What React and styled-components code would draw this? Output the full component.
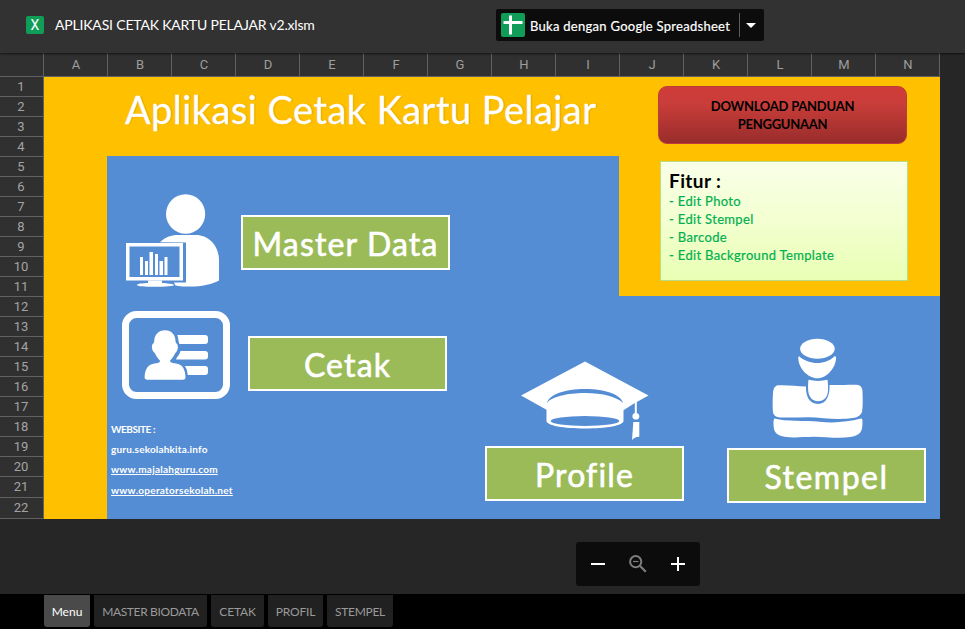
import React from "react";
import styled, { createGlobalStyle } from "styled-components";

const columns = "ABCDEFGHIJKLMN".split("");
const rows = Array.from({ length: 22 }, (_, i) => i + 1);
const features = ["Edit Photo", "Edit Stempel", "Barcode", "Edit Background Template"];
const tabs = [
  { name: "Menu", width: 46, spacing: 0 },
  { name: "MASTER BIODATA", width: 113, spacing: -0.35 },
  { name: "CETAK", width: 53, spacing: -0.2 },
  { name: "PROFIL", width: 55, spacing: -0.2 },
  { name: "STEMPEL", width: 66, spacing: -0.3 },
];

const OperatorIcon = () => (
  <svg width="94" height="93" viewBox="126 194 94 93" fill="#fff">
    <ellipse cx="185.6" cy="214" rx="19.6" ry="19.8" />
    <path d="M160 242.3C165 237 171 235 178 235h18c13 0 23 11 23 25v20.500c-8 4-18 6-28 6-6 0-12 0-15.500-1l-1.500-3H186v-40z" />
    <path d="M126 243h57v37.500h-57zM129.500 246.500v30.500h50v-30.500z" fillRule="evenodd" />
    <path d="M148 280.500h14v2.500c5 .3 12 .8 12 2s-9 1.800-19 1.800-18-.5-18-1.800 6-1.700 11-2z" />
    <path d="M140 257h3v18h-3zM145 261h3v14h-3zM149.500 252h3.500v23h-3.500zM155 254h3v21h-3zM159.500 261h3.500v14h-3.500zM164.500 257h3v18h-3z" />
  </svg>
);

const CardIcon = () => (
  <svg width="108" height="88" viewBox="122 311 108 88" fill="#fff">
    <rect x="125.500" y="314.500" width="101" height="81" rx="11" fill="none" stroke="#fff" strokeWidth="7" />
    <path d="M165 330.300c6.500 0 10.600 4.500 10.600 11.500 0 1.500 2.400 1.800 2.300 5.500-.1 3-1.500 5-2.800 6-1 3-3.200 5-5.100 7.500.4 2.200 3 2.500 6 2.700 6 .5 9.200 5 9.500 13.500 0 1.700-.8 2.700-2.500 2.700h-35.800c-1.700 0-2.600-1-2.600-2.700.3-8.500 4-13 10-13.500 3-.2 5.300-.5 5.400-2.700-1.900-2.500-4-4.500-5-7.500-1.500-1-3-3-3.100-6-.1-3.700 2.200-4 2.300-5.500 0-7 4.300-11.500 10.800-11.500z" />
    <path d="M177.300 335H205q3 0 3 3v3q0 3-3 3h-25.500c-1.500-2.500-.7-5-2.200-9zM180.500 351H205q3 0 3 3v2.500q0 3-3 3h-29c.5-2.500 4-5 4.500-8.500zM184.800 366H205q3 0 3 3v3q0 3-3 3h-17.300c-.2-3-1-6.500-2.900-9z" />
  </svg>
);

const CapIcon = () => (
  <svg width="128" height="80" viewBox="521 361 128 80" fill="#fff">
    <path d="M585 361.500L648.500 395.500 636.800 402v11a3.500 3.500 0 0 1 .7 6.500h-3.200a3.500 3.500 0 0 1 .5-6.500v-10l-11.300 7.300V421c0 4.500-17 7.500-38.500 7.500s-38.500-3-38.500-7.500v-11.300L521 395.500z" />
    <path d="M547 403c2-8.500 18-14 38-14s36 5.500 38 14c-6-6-20-10-38-10s-34 4-38 10z" fill="#548dd4" />
    <ellipse cx="585" cy="421" rx="34.300" ry="5" fill="#548dd4" />
    <path d="M633.300 422h6v14.800c-3 .2-5 .7-7.300 3.200z" />
  </svg>
);

const StampIcon = () => (
  <svg width="92" height="101" viewBox="772 338 92 101" fill="#fff">
    <ellipse cx="817.400" cy="348.800" rx="17.300" ry="10" />
    <path d="M799 356.300c10 9 27 9 35.500 0 1.500-.3 1.700.7 1.600 2-.5 9.500-9 20-18.700 20-9.500 0-18.500-10-19-19-.1-1.500-.4-2.700.6-3z" />
    <path d="M808.500 379.800c6 1.500 13 1.500 19 0 .7 5 .8 9 .3 13-.7 5-5 8.500-10 8.500-4.800 0-8.700-4-9.400-9-.5-3.500-.5-8 .1-12.500z" />
    <path d="M778 385.300c9-.5 18 .8 28 1.200-.3 9 3 17.500 12 17.500 8.500 0 12-9 11.500-19 10 .3 20-.6 27-.3 4 .2 6 3 6 7 .3 8 .4 14-.3 19-.6 4-4 6.300-8 7-16 2.800-31-.2-46-.5-9 0-18 .7-28 .2-4-.2-7-2-7.300-6-.3-8-.3-12 .1-18 .3-4.500 1.500-7.500 5-8.100z" />
    <path d="M774.500 418.500c12 3.300 30 1.800 45 3.300 14 1.300 28 .5 41.500-3.200 1 0 1.600 1.200 1.500 3 .1 10-2 14-12 15.500-14 1.700-25-.5-37-.4-11 .1-19 1.500-29 0-9.500-2-11-5.500-11-14 0-2.200.2-3.700 1-4.200z" />
  </svg>
);

const App = () => {
  return (
    <Page>
      <GlobalStyle />
      <Header>
        <FileInfo>
          <FileBadge>X</FileBadge>
          <FileName>APLIKASI CETAK KARTU PELAJAR v2.xlsm</FileName>
        </FileInfo>
        <OpenButton>
          <svg width="24" height="24" viewBox="0 0 24 24">
            <rect width="24" height="24" rx="2" fill="#0f9d58" />
            <path d="M2.500 9.500h19M9.500 2.500v19" stroke="#fff" strokeWidth="3" />
          </svg>
          <OpenLabel>Buka dengan Google Spreadsheet</OpenLabel>
          <OpenArrow>
            <svg width="10" height="5" viewBox="0 0 10 5">
              <path d="M0 0h10L5 5z" fill="#fff" />
            </svg>
          </OpenArrow>
        </OpenButton>
      </Header>
      <ColumnBar>
        <Corner />
        {columns.map((column) => (
          <ColumnHead key={column}>{column}</ColumnHead>
        ))}
      </ColumnBar>
      <SheetArea>
        <RowBar>
          {rows.map((row) => (
            <RowHead key={row} $tall={row > 20}>
              {row}
            </RowHead>
          ))}
        </RowBar>
        <Board>
          <TitleCell>
            <Title>Aplikasi Cetak Kartu Pelajar</Title>
          </TitleCell>
          <SideCell>
            <DownloadButton>
              DOWNLOAD PANDUAN
              <br />
              PENGGUNAAN
            </DownloadButton>
            <FeatureBox>
              <FeatureTitle>Fitur :</FeatureTitle>
              {features.map((feature) => (
                <Feature key={feature}>- {feature}</Feature>
              ))}
            </FeatureBox>
          </SideCell>
          <MenuCell>
            <MenuItem $left={19} $gap={21} $drop={21} $height={93}>
              <OperatorIcon />
              <SheetButton $width={209}>Master Data</SheetButton>
            </MenuItem>
            <MenuItem $left={15} $gap={18} $drop={25} $height={88}>
              <CardIcon />
              <SheetButton $width={199}>Cetak</SheetButton>
            </MenuItem>
            <Websites>
              <Site $spacing={-0.45}>WEBSITE :</Site>
              <Site $spacing={0.18}>guru.sekolahkita.info</Site>
              <Site $spacing={0.25} $link>
                www.majalahguru.com
              </Site>
              <Site $spacing={0.27} $link $last>
                www.operatorsekolah.net
              </Site>
            </Websites>
          </MenuCell>
          <FillCell />
          <BottomCell>
            <StackItem $top={65} $gap={5}>
              <CapIcon />
              <SheetButton $width={199}>Profile</SheetButton>
            </StackItem>
            <StackItem $top={42} $gap={9} $shift={18}>
              <StampIcon />
              <SheetButton $width={199} $spacing={1.5}>
                Stempel
              </SheetButton>
            </StackItem>
          </BottomCell>
        </Board>
      </SheetArea>
      <ZoomArea>
        <ZoomBar>
          <svg width="14" height="14" viewBox="0 0 14 14">
            <path d="M0 7h14" stroke="#fff" strokeWidth="2" />
          </svg>
          <svg width="18" height="18" viewBox="0 0 18 18" fill="none" stroke="#7d7d7d">
            <circle cx="6.700" cy="6.700" r="5.600" strokeWidth="2" />
            <path d="M4 6.500h5.500" strokeWidth="1.200" />
            <path d="M11 11l5.800 5.800" strokeWidth="2.200" />
          </svg>
          <svg width="14" height="14" viewBox="0 0 14 14">
            <path d="M0 7h14M7 0v14" stroke="#fff" strokeWidth="2" />
          </svg>
        </ZoomBar>
      </ZoomArea>
      <TabBar>
        {tabs.map((tab, i) => (
          <Tab key={tab.name} $width={tab.width} $spacing={tab.spacing} $active={i === 0}>
            {tab.name}
          </Tab>
        ))}
      </TabBar>
    </Page>
  );
};

export default App;

const GlobalStyle = createGlobalStyle`
  * {
    box-sizing: border-box;
  }
  body {
    margin: 0;
    background: #262626;
    overflow: hidden;
  }
  svg {
    display: block;
    flex: none;
  }
  button {
    padding: 0;
    margin: 0;
    font: inherit;
    flex: none;
  }
`;
const Page = styled.div`
  width: 965px;
  height: 629px;
  display: flex;
  flex-direction: column;
  background: #262626;
  font-family: Lato, "Open Sans", sans-serif;
  white-space: nowrap;
`;
const Header = styled.header`
  height: 53px;
  flex: none;
  display: grid;
  grid-template-columns: 496px auto;
  background: #323232;
  box-shadow: 0 1px 2px rgba(0, 0, 0, 0.6);
  z-index: 1;
`;
const FileInfo = styled.div`
  display: flex;
  align-items: center;
  gap: 11px;
  height: 50px;
  padding-left: 26px;
`;
const FileBadge = styled.div`
  width: 18px;
  height: 18px;
  border-radius: 2px;
  background: #0f9d58;
  color: #fff;
  font: 14px/18px Roboto, sans-serif;
  text-align: center;
`;
const FileName = styled.div`
  padding-bottom: 2px;
  color: #fff;
  font-size: 14px;
  letter-spacing: -0.18px;
`;
const OpenButton = styled.button`
  display: flex;
  align-items: center;
  width: 268px;
  height: 32px;
  margin-top: 9px;
  padding-left: 5px;
  border: 0;
  border-radius: 2px;
  background: #0c0c0c;
  color: #fff;
`;
const OpenLabel = styled.span`
  width: 214px;
  padding: 1px 0 0 5px;
  font-size: 13px;
  letter-spacing: 0.28px;
  text-align: left;
  -webkit-text-stroke: 0.2px #fff;
`;
const OpenArrow = styled.span`
  height: 24px;
  display: flex;
  align-items: center;
  padding-left: 6px;
  border-left: 1px solid #5c5c5c;
`;
const ColumnBar = styled.div`
  display: flex;
  flex: none;
  height: 24px;
`;
const Corner = styled.div`
  width: 44px;
  background: #303030;
  border-right: 1px solid #616161;
  border-bottom: 1px solid #616161;
`;
const ColumnHead = styled.div`
  width: 64px;
  padding-left: 1px;
  background: #303030;
  border-right: 1px solid #616161;
  border-bottom: 1px solid #616161;
  color: #9e9e9e;
  font: 13px/24px Roboto, sans-serif;
  text-align: center;
`;
const SheetArea = styled.div`
  display: flex;
  flex: none;
  height: 442px;
`;
const RowBar = styled.div`
  width: 44px;
`;
const RowHead = styled.div`
  height: ${(props) => (props.$tall ? "21px" : "20px")};
  background: #303030;
  border-right: 1px solid #616161;
  border-bottom: 1px solid #616161;
  color: #a4a4a4;
  font: 13px/20px Roboto, sans-serif;
  text-align: center;
  padding-right: 1px;
`;
const Board = styled.div`
  display: grid;
  grid-template-columns: 63px 378px 134px 321px;
  grid-template-rows: 79px 140px 223px;
  width: 896px;
  background: #ffc000;
`;
const TitleCell = styled.div`
  grid-area: 1 / 2 / 2 / 4;
  padding-left: 18px;
`;
const Title = styled.h1`
  margin: 0;
  color: #fff;
  font-size: 38px;
  font-weight: 400;
  line-height: 65px;
  letter-spacing: 0.45px;
  text-shadow: 1px 0 1px rgba(120, 100, 40, 0.4);
  -webkit-text-stroke: 0.3px #fff;
`;
const SideCell = styled.div`
  grid-area: 1 / 4 / 3 / 5;
  padding: 9px 0 0 39px;
`;
const DownloadButton = styled.button`
  display: block;
  width: 249px;
  height: 58px;
  border: 1px solid #be3c39;
  border-radius: 9px;
  background: linear-gradient(#d03c39, #c93d3a 30%, #982d2b);
  color: #000;
  font-size: 13px;
  font-weight: 700;
  line-height: 18px;
  letter-spacing: -0.25px;
`;
const FeatureBox = styled.div`
  width: 248px;
  height: 120px;
  margin: 17px 0 0 2px;
  padding: 8px 0 0 8px;
  border: 1px solid #b9dc84;
  background: linear-gradient(#f9ffe8, #f3ffd0 50%, #e8ffb4);
`;
const FeatureTitle = styled.div`
  color: #000;
  font-size: 19px;
  font-weight: 700;
  line-height: 21px;
  margin-bottom: 1px;
  letter-spacing: 0.4px;
`;
const Feature = styled.div`
  color: #00b050;
  font-size: 13px;
  line-height: 18px;
  letter-spacing: 0.33px;
  -webkit-text-stroke: 0.2px #00b050;
`;
const MenuCell = styled.div`
  grid-area: 2 / 2 / 4 / 3;
  display: flex;
  flex-direction: column;
  gap: 24px;
  padding-top: 38px;
  background: #548dd4;
`;
const MenuItem = styled.div`
  display: flex;
  gap: ${(props) => props.$gap}px;
  padding-left: ${(props) => props.$left}px;
  height: ${(props) => props.$height}px;

  button {
    margin-top: ${(props) => props.$drop}px;
  }
`;
const SheetButton = styled.button`
  width: ${(props) => props.$width}px;
  height: 55px;
  padding-top: 2px;
  border: 2px solid #fff;
  background: #9bbb59;
  color: #fff;
  font-size: 32px;
  line-height: 47px;
  letter-spacing: ${(props) => props.$spacing || 1.15}px;
  -webkit-text-stroke: 0.6px #fff;
`;
const Websites = styled.div`
  display: flex;
  flex-direction: column;
  margin-top: -4px;
  padding-left: 4px;
`;
const Site = styled.div`
  color: #fff;
  font-size: 10px;
  font-weight: 700;
  line-height: 20px;
  padding-top: ${(props) => (props.$last ? "1px" : "0")};
  letter-spacing: ${(props) => props.$spacing}px;
  text-decoration: ${(props) => (props.$link ? "underline" : "none")};
`;
const FillCell = styled.div`
  grid-area: 2 / 3 / 3 / 4;
  background: #548dd4;
`;
const BottomCell = styled.div`
  grid-area: 3 / 3 / 4 / 5;
  display: flex;
  gap: 43px;
  background: #548dd4;
`;
const StackItem = styled.div`
  display: flex;
  flex-direction: column;
  align-items: center;
  gap: ${(props) => props.$gap}px;
  padding-top: ${(props) => props.$top}px;

  svg {
    margin-right: ${(props) => props.$shift || 0}px;
  }
`;
const ZoomArea = styled.div`
  flex: none;
  height: 75px;
  padding: 23px 0 0 576px;
`;
const ZoomBar = styled.div`
  display: flex;
  align-items: center;
  justify-content: space-between;
  width: 124px;
  height: 44px;
  padding: 0 15px;
  border-radius: 3px;
  background: #0c0c0c;
`;
const TabBar = styled.nav`
  display: flex;
  gap: 4px;
  height: 35px;
  padding: 1px 0 0 44px;
  background: #000;
`;
const Tab = styled.div`
  width: ${(props) => props.$width}px;
  height: 32px;
  border-radius: 0 0 3px 3px;
  background: ${(props) => (props.$active ? "#4a4a4a" : "#212121")};
  color: ${(props) => (props.$active ? "#fff" : "#9a9a9a")};
  font-size: 12px;
  line-height: 33px;
  letter-spacing: ${(props) => props.$spacing}px;
  text-align: center;
`;
